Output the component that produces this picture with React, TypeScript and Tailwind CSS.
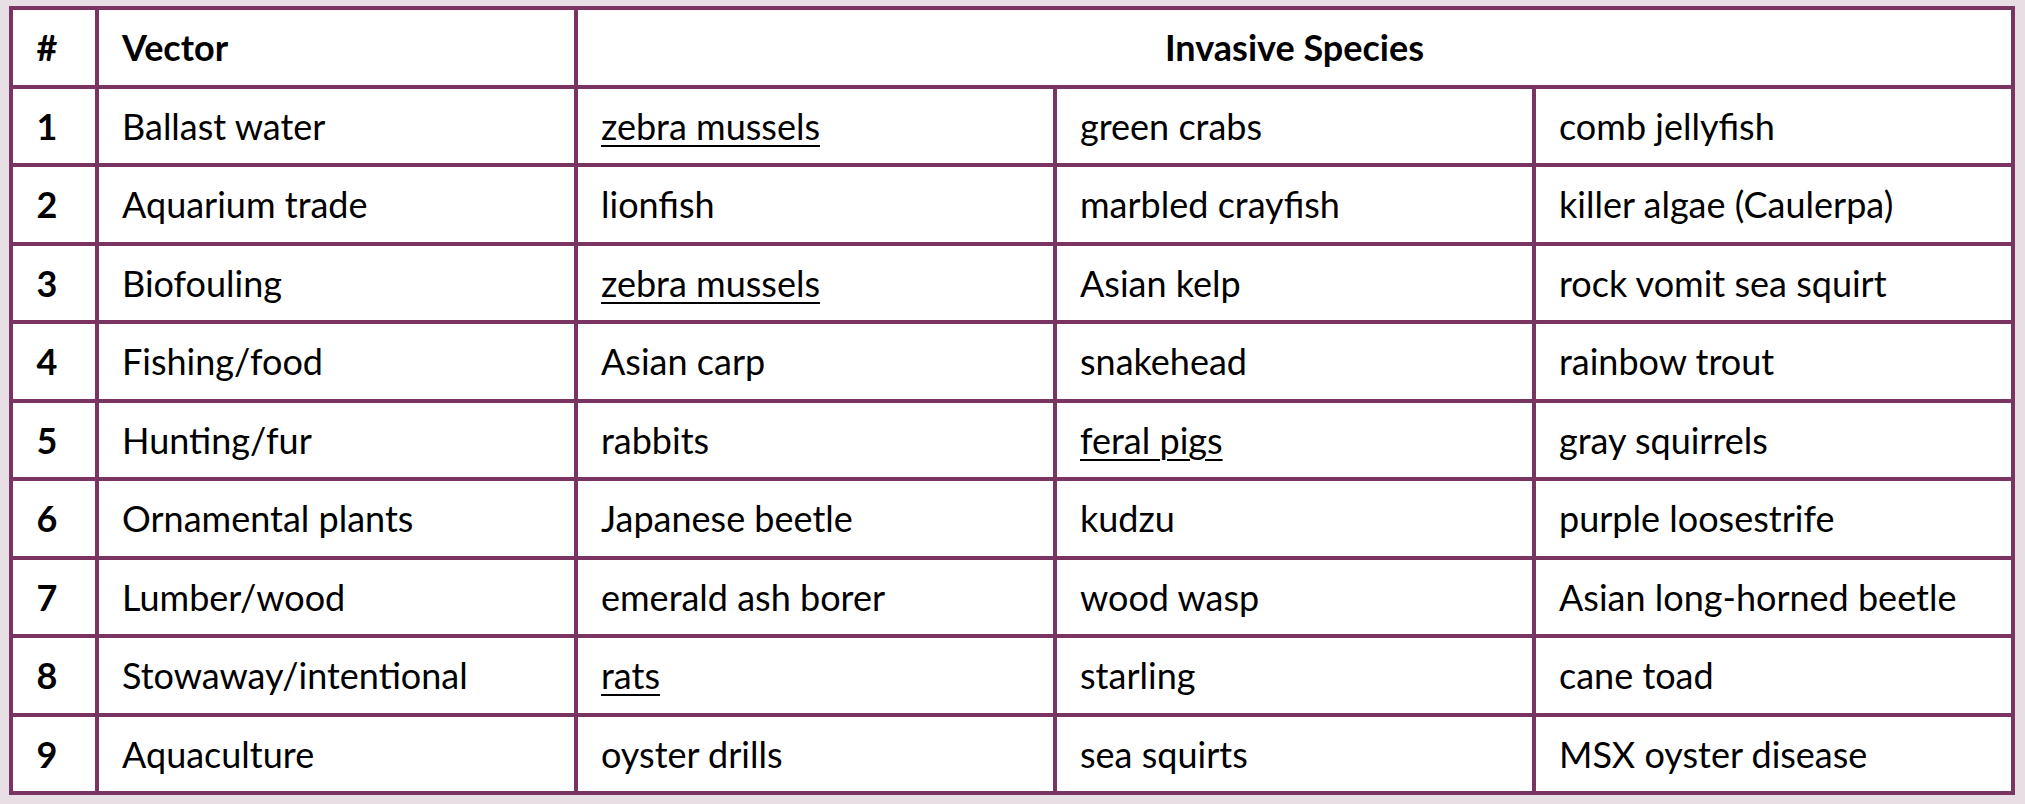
const ROWS: { n: number; vector: string; species: [string, string, string]; u?: number }[] = [
  { n: 1, vector: 'Ballast water', species: ['zebra mussels', 'green crabs', 'comb jellyfish'], u: 0 },
  { n: 2, vector: 'Aquarium trade', species: ['lionfish', 'marbled crayfish', 'killer algae (Caulerpa)'] },
  { n: 3, vector: 'Biofouling', species: ['zebra mussels', 'Asian kelp', 'rock vomit sea squirt'], u: 0 },
  { n: 4, vector: 'Fishing/food', species: ['Asian carp', 'snakehead', 'rainbow trout'] },
  { n: 5, vector: 'Hunting/fur', species: ['rabbits', 'feral pigs', 'gray squirrels'], u: 1 },
  { n: 6, vector: 'Ornamental plants', species: ['Japanese beetle', 'kudzu', 'purple loosestrife'] },
  { n: 7, vector: 'Lumber/wood', species: ['emerald ash borer', 'wood wasp', 'Asian long-horned beetle'] },
  { n: 8, vector: 'Stowaway/intentional', species: ['rats', 'starling', 'cane toad'], u: 0 },
  { n: 9, vector: 'Aquaculture', species: ['oyster drills', 'sea squirts', 'MSX oyster disease'] },
]

// shared cell look: thick plum rule, fixed row height
const cell = 'border-[4px] border-[#7a3461] h-[78.5px] p-0 align-middle'

export default function App() {
  return (
    <div className="h-[804px] w-[2025px] bg-[#e8dfe5] pl-[9px] pt-[6px] font-['Lato','Open_Sans',sans-serif] text-[36px] text-black">
      <table className="w-[2006px] table-fixed border-collapse bg-white">
        <colgroup>
          <col className="w-[86px]" />
          <col className="w-[479px]" />
          <col className="w-[479px]" />
          <col className="w-[479px]" />
          <col className="w-[479px]" />
        </colgroup>
        <thead>
          <tr>
            <th className={`${cell} pr-[14px] text-center font-bold`}>#</th>
            <th className={`${cell} pl-[23px] text-left font-bold`}>Vector</th>
            <th colSpan={3} className={`${cell} text-center font-bold`}>Invasive Species</th>
          </tr>
        </thead>
        <tbody>
          {ROWS.map((r) => (
            <tr key={r.n}>
              <td className={`${cell} pr-[14px] text-center font-bold`}>{r.n}</td>
              <td className={`${cell} pl-[23px]`}>{r.vector}</td>
              {r.species.map((s, i) => (
                <td key={i} className={`${cell} pl-[23px]`}>
                  {r.u === i ? <span className="underline decoration-[2px] underline-offset-[5px]">{s}</span> : s}
                </td>
              ))}
            </tr>
          ))}
        </tbody>
      </table>
    </div>
  )
}
